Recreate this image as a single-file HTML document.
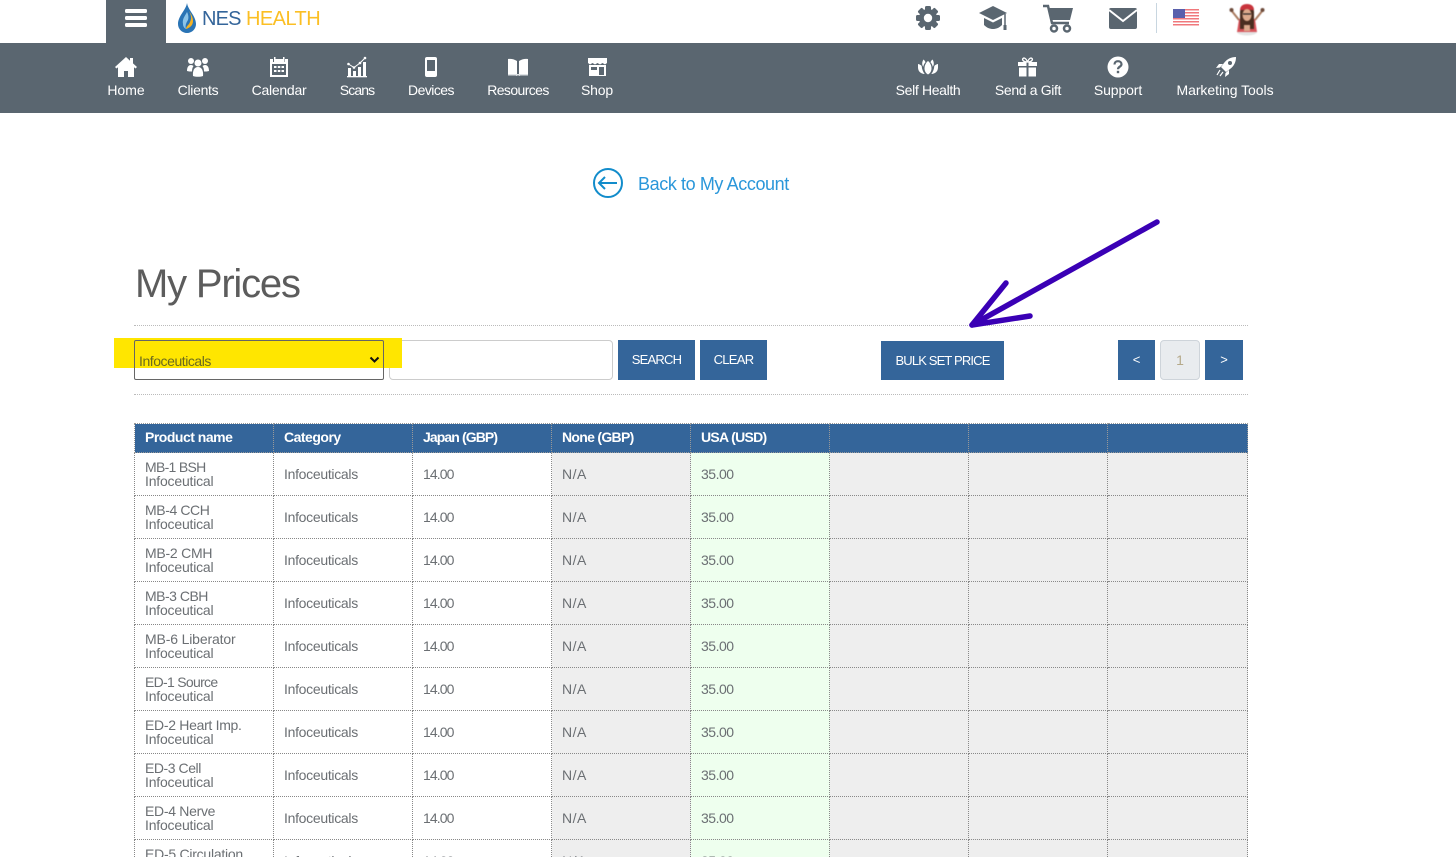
<!DOCTYPE html>
<html><head><meta charset="utf-8"><title>My Prices</title>
<style>
html,body{margin:0;padding:0;background:#fff;width:1456px;height:857px;overflow:hidden}
#w{position:relative;width:1456px;height:857px;overflow:hidden;font-family:"Liberation Sans",sans-serif}
.a{position:absolute}
.nav{left:0;top:43px;width:1456px;height:70px;background:#5a6670}
.lbl{position:absolute;top:82px;height:16px;line-height:16px;font-size:14px;color:#fff;white-space:nowrap;transform:translateX(-50%)}
.btn{position:absolute;background:#34659a;color:#fff;font-size:13px;text-align:center;height:40px;line-height:40px;top:340px}
.hr{position:absolute;left:134px;width:1114px;border-top:1px dotted #bbb;height:0}
table{position:absolute;left:134px;top:423px;width:1114px;border-collapse:collapse;table-layout:fixed;font-size:14px;color:#6b6f73;border:1px dotted #888}
th{height:29px;background:#34659a;color:#fff;font-size:14px;text-align:left;padding:0 10px 2px;border:1px dotted #999;box-sizing:border-box}
td{height:43px;padding:0 10px;border:1px dotted #888;line-height:14px;box-sizing:border-box;white-space:nowrap}
td:nth-child(1){letter-spacing:-.2px}
td:nth-child(2){letter-spacing:-.3px}
td:nth-child(3){letter-spacing:-.9px}
td:nth-child(4){letter-spacing:.5px}
td:nth-child(5){letter-spacing:-.5px}
td span{display:inline}
.g{background:#eee}.u{background:#eeffee}
</style></head><body><div id="w">

<div class="a" style="left:106px;top:0;width:60px;height:43px;background:#5a6670"></div>
<svg class="a" style="left:124px;top:8px" width="24" height="20"><g fill="#fff"><rect x="1" y="1" width="22" height="4" rx="1.5"/><rect x="1" y="8" width="22" height="4" rx="1.5"/><rect x="1" y="15" width="22" height="4" rx="1.5"/></g></svg>

<svg class="a" style="left:176px;top:2px" width="22" height="32" viewBox="0 0 22 32"><path d="M11 1C10 8 2 14 2 22c0 5 4 9 9 9s9-4 9-9C20 14 12 8 11 1z" fill="#2a74b5"/><path d="M13 9c2 4 3 7 1 11-1 3-4 4-4 7 3-1 7-3 7-8 0-4-2-7-4-10z" fill="#f5b324"/><path d="M11 10c-2 4-5 7-4 12 0 2 1 4 3 5-1-3 0-6 2-9 1-3 0-6-1-8z" fill="#8cc4e8"/></svg>
<div class="a" style="left:202px;top:7px;font-size:20px;line-height:24px;color:#34659a;white-space:nowrap;letter-spacing:-.8px">NES</div>
<div class="a" style="left:246px;top:7px;font-size:20px;line-height:24px;color:#fbbf24;white-space:nowrap;letter-spacing:-.55px">HEALTH</div>

<svg class="a" style="left:915px;top:5px" width="26" height="26" viewBox="0 0 26 26"><g fill="#5a6670"><circle cx="13" cy="13" r="9"/><rect x="10" y="1" width="6" height="24" rx="1.5"/><rect x="10" y="1" width="6" height="24" rx="1.5" transform="rotate(45 13 13)"/><rect x="10" y="1" width="6" height="24" rx="1.5" transform="rotate(90 13 13)"/><rect x="10" y="1" width="6" height="24" rx="1.5" transform="rotate(135 13 13)"/></g><circle cx="13" cy="13" r="4.2" fill="#fff"/></svg>
<svg class="a" style="left:978px;top:5px" width="30" height="26" viewBox="0 0 30 26"><path d="M15 1L1 8l14 7 14-7z" fill="#5a6670"/><path d="M6 13v7c3 3 6 4 9 4s6-1 9-4v-7l-9 4.500z" fill="#5a6670"/><path d="M27 9v12" stroke="#5a6670" stroke-width="1.500"/><rect x="25.500" y="20" width="3" height="5" fill="#5a6670"/></svg>
<svg class="a" style="left:1042px;top:4px" width="32" height="29" viewBox="0 0 32 29"><path d="M1 2h5l4 17h17" fill="none" stroke="#5a6670" stroke-width="2.500"/><path d="M7 4h24l-3 12H10z" fill="#5a6670"/><circle cx="12" cy="24.500" r="3" fill="#fff" stroke="#5a6670" stroke-width="2.500"/><circle cx="25" cy="24.500" r="3" fill="#fff" stroke="#5a6670" stroke-width="2.500"/></svg>
<svg class="a" style="left:1108px;top:7px" width="30" height="23" viewBox="0 0 30 23"><rect x="1" y="1" width="28" height="21" rx="2" fill="#5a6670"/><path d="M1 3l14 11L29 3" fill="none" stroke="#fff" stroke-width="2"/></svg>
<div class="a" style="left:1156px;top:3px;width:1px;height:30px;background:#c8d6e0"></div>
<svg class="a" style="left:1173px;top:9px" width="26" height="18" viewBox="0 0 26 18"><rect width="26" height="18" fill="#fff"/><g fill="#f0787c"><rect y="0" width="26" height="1.500"/><rect y="3" width="26" height="1.500"/><rect y="6" width="26" height="1.500"/><rect y="9" width="26" height="1.500"/><rect y="12" width="26" height="1.500"/><rect y="15" width="26" height="1.500"/></g><rect width="12" height="9" fill="#5a60ac"/></svg>
<svg class="a" style="left:1228px;top:2px;filter:blur(.4px)" width="38" height="34" viewBox="0 0 38 34"><ellipse cx="19" cy="30" rx="10" ry="3.500" fill="#e4e4e4"/><path d="M3 8l8 10M35 8l-8 10" stroke="#a87a5e" stroke-width="2"/><circle cx="3.500" cy="8" r="2" fill="#6d4a3a"/><circle cx="34.500" cy="8" r="2" fill="#6d4a3a"/><path d="M11 17h16l2 13H9z" fill="#d8555c"/><path d="M12 10c0-4 3-6 7-6s7 2 7 6v17h-4v-3h-6v3h-4z" fill="#4a2e20"/><path d="M12 8c0-4 3-6 7-6s7 2 7 6z" fill="#c8333c"/><ellipse cx="19" cy="13" rx="4.500" ry="6" fill="#dcaa8c"/><path d="M15 12h8" stroke="#222" stroke-width="1.200"/><path d="M16 23h6v6h-6z" fill="#dcaa8c"/></svg>

<div class="a nav"></div>

<svg class="a" style="left:114px;top:56px" width="24" height="22" viewBox="0 0 24 22"><path d="M12 1L1 11l1.500 1.500L4 11.200V21h6v-6h4v6h6v-9.800l1.500 1.300L23 11l-4-3.600V2h-3v2.700z" fill="#fff"/></svg>
<svg class="a" style="left:186px;top:57px" width="24" height="20" viewBox="0 0 24 20"><g fill="#fff"><circle cx="5" cy="4" r="3"/><circle cx="19" cy="4" r="3"/><circle cx="12" cy="6" r="3.500"/><path d="M1 14c0-3 1-6 4-6 1 0 2 .5 2.500 1-1 1.500-1.500 3-1.500 5.500-2 0-3.500 0-5-.5zM23 14c0-3-1-6-4-6-1 0-2 .5-2.500 1 1 1.500 1.500 3 1.500 5.500 2 0 3.500 0 5-.5z"/><path d="M7 19c-.5-5 1-9 5-9s5.500 4 5 9c-3 1-7 1-10 0z"/></g></svg>
<svg class="a" style="left:269px;top:56px" width="20" height="22" viewBox="0 0 20 22"><path d="M1 3h3v3h2V3h8v3h2V3h3v18H1z" fill="#fff"/><rect x="5" y="1" width="1.500" height="5" fill="#fff"/><rect x="14" y="1" width="1.500" height="5" fill="#fff"/><rect x="3" y="8" width="14" height="11" fill="#5a6670"/><g fill="#fff"><rect x="5" y="10" width="2.500" height="2"/><rect x="8.800" y="10" width="2.500" height="2"/><rect x="12.500" y="10" width="2.500" height="2"/><rect x="5" y="14" width="2.500" height="2"/><rect x="8.800" y="14" width="2.500" height="2"/><rect x="12.500" y="14" width="2.500" height="2"/></g></svg>
<svg class="a" style="left:346px;top:56px" width="22" height="22" viewBox="0 0 22 22"><g fill="#fff"><rect x="2" y="12" width="3" height="8"/><rect x="7" y="15" width="3" height="5"/><rect x="12" y="11" width="3" height="9"/><rect x="17" y="6" width="3" height="14"/><rect x="1" y="20" width="20" height="1.300"/><circle cx="2.500" cy="8" r="1.300"/><circle cx="8" cy="11.500" r="1.300"/><circle cx="14" cy="7" r="1.300"/><circle cx="19" cy="2" r="1.300"/></g><path d="M2.500 8L8 11.500 14 7l5-5" fill="none" stroke="#fff" stroke-width="1"/></svg>
<svg class="a" style="left:424px;top:57px" width="14" height="21" viewBox="0 0 14 21"><rect x="1" y="0" width="12" height="20" rx="2" fill="#fff"/><rect x="3" y="3" width="8" height="11" fill="#5a6670"/></svg>
<svg class="a" style="left:507px;top:58px" width="22" height="19" viewBox="0 0 22 19"><path d="M1 1c3-.5 6 0 9 2v15c-3-1.500-6-2-9-1.500z" fill="#fff"/><path d="M21 1c-3-.5-6 0-9 2v15c3-1.500 6-2 9-1.500z" fill="#fff"/><rect y="16" x="1" width="20" height="1.500" fill="#dfe3e6"/></svg>
<svg class="a" style="left:587px;top:57px" width="21" height="20" viewBox="0 0 21 20"><path d="M1 1h19v5l-2 1.500-2.500-1.500-2.500 1.500-2.500-1.500L8 7.500 5.500 6 3 7.500 1 6z" fill="#fff"/><path d="M2 8h17v11H2z" fill="#fff"/><rect x="4" y="10" width="6" height="3" fill="#5a6670"/><rect x="12" y="10" width="5" height="8" fill="#5a6670"/></svg>

<svg class="a" style="left:917px;top:58px" width="22" height="18" viewBox="0 0 22 18"><g fill="#fff"><path d="M11 3c2.500 2 3.500 5 3.500 7.500S13 15.500 11 16.500c-2-1-3.500-3.500-3.500-6S8.500 5 11 3z"/><path d="M6.500 1.500c1 .8 1.600 1.700 2 2.700-1.400 1.600-2 3-2.200 4.500-.8-1-1.100-1.900-1.100-3 0-1.700.5-3.100 1.300-4.200zM15.500 1.500c-1 .8-1.600 1.700-2 2.700 1.400 1.600 2 3 2.200 4.500.8-1 1.100-1.900 1.100-3 0-1.700-.5-3.100-1.300-4.200z"/><path d="M1 6c1.500.3 2.800 1 3.700 2 .2 3 1.200 5.800 3 8-3.500 0-6.700-2.500-6.700-6.500zM21 6c-1.500.3-2.800 1-3.700 2-.2 3-1.200 5.800-3 8 3.500 0 6.700-2.500 6.700-6.500z"/></g></svg>
<svg class="a" style="left:1017px;top:57px" width="21" height="20" viewBox="0 0 21 20"><g fill="#fff"><rect x="1" y="5" width="8.500" height="4"/><rect x="11.500" y="5" width="8.500" height="4"/><rect x="2" y="10.500" width="7.500" height="9"/><rect x="11.500" y="10.500" width="7.500" height="9"/></g><path d="M10.500 5C9 1 7 .5 6 1.500S6 5 10.500 5zM10.500 5C12 1 14 .5 15 1.500S15 5 10.500 5z" fill="none" stroke="#fff" stroke-width="1.300"/></svg>
<svg class="a" style="left:1107px;top:56px" width="22" height="22" viewBox="0 0 22 22"><circle cx="11" cy="11" r="10.500" fill="#fff"/><path d="M7.500 8.500C7.500 6.500 9 5.200 11 5.200s3.500 1.300 3.500 3c0 2.500-3.500 2.500-3.500 5" fill="none" stroke="#5a6670" stroke-width="2.200"/><rect x="9.800" y="14.800" width="2.400" height="2.400" fill="#5a6670"/></svg>
<svg class="a" style="left:1215px;top:56px" width="22" height="22" viewBox="0 0 22 22"><path d="M21 1c-5 0-9 2-12 6l-3 4 5 5 4-3c4-3 6-7 6-12z" fill="#fff"/><circle cx="15" cy="7" r="2" fill="#5a6670"/><path d="M8 8H4L1 12l4-.5zM14 14v4l-4 3 .5-4z" fill="#fff"/><path d="M5 14l-3 5M8 16l-3 4" stroke="#fff" stroke-width="1.200" fill="none"/></svg>

<div class="lbl" style="left:126px">Home</div>
<div class="lbl" style="left:198px;letter-spacing:-.3px">Clients</div>
<div class="lbl" style="left:279px;letter-spacing:-.25px">Calendar</div>
<div class="lbl" style="left:357px;letter-spacing:-.9px">Scans</div>
<div class="lbl" style="left:431px;letter-spacing:-.55px">Devices</div>
<div class="lbl" style="left:518px;letter-spacing:-.6px">Resources</div>
<div class="lbl" style="left:597px;letter-spacing:-.2px">Shop</div>
<div class="lbl" style="left:928px;letter-spacing:-.35px">Self Health</div>
<div class="lbl" style="left:1028px;letter-spacing:-.35px">Send a Gift</div>
<div class="lbl" style="left:1118px;letter-spacing:-.1px">Support</div>
<div class="lbl" style="left:1225px;letter-spacing:-.05px">Marketing Tools</div>

<svg class="a" style="left:592px;top:167px" width="32" height="32" viewBox="0 0 32 32"><circle cx="16" cy="16" r="14" fill="none" stroke="#128ccb" stroke-width="2"/><path d="M25 16H7M13 10l-6 6 6 6" fill="none" stroke="#128ccb" stroke-width="2"/></svg>
<div class="a" style="left:638px;top:172px;font-size:18px;line-height:24px;color:#2a97da;white-space:nowrap;letter-spacing:-.4px">Back to My Account</div>

<div class="a" style="left:135px;top:259px;font-size:40px;line-height:50px;color:#5c5c5c;white-space:nowrap;letter-spacing:-1.2px">My Prices</div>
<div class="hr" style="top:325px"></div>
<div class="hr" style="top:394px"></div>

<div class="a" style="left:389px;top:340px;width:222px;height:38px;border:1px solid #ccc;border-radius:4px"></div>
<div class="a" style="left:114px;top:338px;width:288px;height:30px;background:#ffe600"></div>
<div class="a" style="left:134px;top:340px;width:248px;height:38px;border:1px solid #666;border-radius:2px"></div>
<div class="a" style="left:139px;top:353px;font-size:14px;line-height:16px;color:#6b6a20;white-space:nowrap;letter-spacing:-.45px">Infoceuticals</div>
<svg class="a" style="left:369px;top:356px" width="11" height="8" viewBox="0 0 11 8"><path d="M1.500 1.500l4 4 4-4" fill="none" stroke="#111" stroke-width="2"/></svg>

<div class="btn" style="left:618px;width:77px;letter-spacing:-.8px">SEARCH</div>
<div class="btn" style="left:700px;width:67px;letter-spacing:-.7px">CLEAR</div>
<div class="btn" style="left:881px;width:123px;top:341px;height:39px;line-height:39px;letter-spacing:-.85px">BULK SET PRICE</div>
<div class="btn" style="left:1118px;width:37px">&lt;</div>
<div class="a" style="left:1160px;top:340px;width:38px;height:38px;line-height:38px;text-align:center;background:#e9ecef;border:1px solid #ced4da;border-radius:4px;font-size:14px;color:#b5a98a">1</div>
<div class="btn" style="left:1205px;width:38px">&gt;</div>

<table>
<colgroup><col style="width:139px"><col style="width:139px"><col style="width:139px"><col style="width:139px"><col style="width:139px"><col style="width:139px"><col style="width:139px"><col style="width:140px"></colgroup>
<tr><th style="letter-spacing:-.5px">Product name</th><th style="letter-spacing:-.5px">Category</th><th style="letter-spacing:-.9px">Japan (GBP)</th><th style="letter-spacing:-.7px">None (GBP)</th><th style="letter-spacing:-.7px">USA (USD)</th><th></th><th></th><th></th></tr>
<tr><td><span style="letter-spacing:-.7px">MB-1 BSH</span><br>Infoceutical</td><td>Infoceuticals</td><td>14.00</td><td class="g">N/A</td><td class="u">35.00</td><td class="g"></td><td class="g"></td><td class="g"></td></tr>
<tr><td><span style="letter-spacing:-.4px">MB-4 CCH</span><br>Infoceutical</td><td>Infoceuticals</td><td>14.00</td><td class="g">N/A</td><td class="u">35.00</td><td class="g"></td><td class="g"></td><td class="g"></td></tr>
<tr><td><span style="letter-spacing:-.25px">MB-2 CMH</span><br>Infoceutical</td><td>Infoceuticals</td><td>14.00</td><td class="g">N/A</td><td class="u">35.00</td><td class="g"></td><td class="g"></td><td class="g"></td></tr>
<tr><td><span style="letter-spacing:-.5px">MB-3 CBH</span><br>Infoceutical</td><td>Infoceuticals</td><td>14.00</td><td class="g">N/A</td><td class="u">35.00</td><td class="g"></td><td class="g"></td><td class="g"></td></tr>
<tr><td><span style="letter-spacing:-.15px">MB-6 Liberator</span><br>Infoceutical</td><td>Infoceuticals</td><td>14.00</td><td class="g">N/A</td><td class="u">35.00</td><td class="g"></td><td class="g"></td><td class="g"></td></tr>
<tr><td><span style="letter-spacing:-.7px">ED-1 Source</span><br>Infoceutical</td><td>Infoceuticals</td><td>14.00</td><td class="g">N/A</td><td class="u">35.00</td><td class="g"></td><td class="g"></td><td class="g"></td></tr>
<tr><td><span style="letter-spacing:-.3px">ED-2 Heart Imp.</span><br>Infoceutical</td><td>Infoceuticals</td><td>14.00</td><td class="g">N/A</td><td class="u">35.00</td><td class="g"></td><td class="g"></td><td class="g"></td></tr>
<tr><td><span style="letter-spacing:-.45px">ED-3 Cell</span><br>Infoceutical</td><td>Infoceuticals</td><td>14.00</td><td class="g">N/A</td><td class="u">35.00</td><td class="g"></td><td class="g"></td><td class="g"></td></tr>
<tr><td><span style="letter-spacing:-.3px">ED-4 Nerve</span><br>Infoceutical</td><td>Infoceuticals</td><td>14.00</td><td class="g">N/A</td><td class="u">35.00</td><td class="g"></td><td class="g"></td><td class="g"></td></tr>
<tr><td><span style="letter-spacing:-.25px">ED-5 Circulation</span><br>Infoceutical</td><td>Infoceuticals</td><td>14.00</td><td class="g">N/A</td><td class="u">35.00</td><td class="g"></td><td class="g"></td><td class="g"></td></tr>
</table>

<svg class="a" style="left:0;top:0;pointer-events:none" width="1456" height="857"><g fill="none" stroke="#3a00b5" stroke-width="5.500" stroke-linecap="round" stroke-linejoin="round"><path d="M1157 222L972 325"/><path d="M1006 283L972 325L1030 316"/></g></svg>
</div></body></html>
